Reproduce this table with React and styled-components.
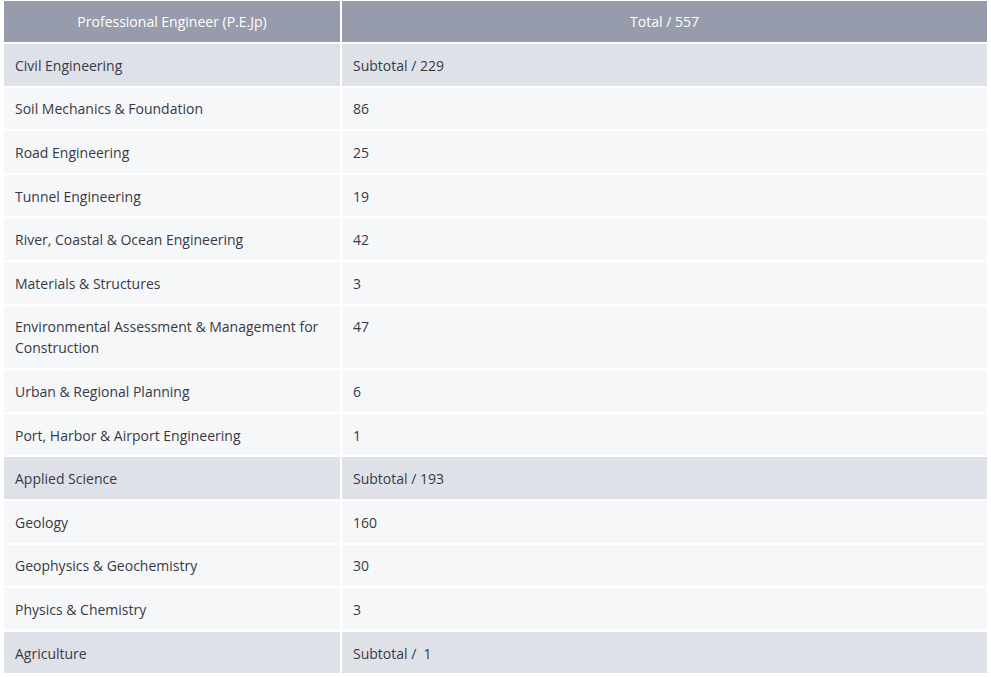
import React from 'react'
import styled, { createGlobalStyle } from 'styled-components'

const GlobalStyle = createGlobalStyle`
body {
  margin: 0;
  background: #fff;
  font-family: "Open Sans", "Noto Sans", sans-serif;
}
`;

const Wrap = styled.div`
padding: 0 2px;
margin-top: -1px;
`;

const Table = styled.table`
width: 100%;
border-collapse: separate;
border-spacing: 2px;
font-size: 14px;
color: #373a46;
`;

const Th = styled.th`
background-color: #979cac;
color: #fff;
font-weight: 400;
height: 41px;
padding: 0 11px;
line-height: 21px;
text-align: center;
box-sizing: border-box;
`;

const Td = styled.td`
background-color: ${({ sub }) => (sub ? '#dfe1e8' : '#f6f7f9')};
padding: 10.8px 11px 9.8px;
line-height: 21px;
vertical-align: top;
text-align: left;
`;

const NameTd = styled(Td)`
width: 314px;
`;

const rows = [
  { name: 'Civil Engineering', value: 'Subtotal / 229', sub: true },
  { name: 'Soil Mechanics & Foundation', value: '86' },
  { name: 'Road Engineering', value: '25' },
  { name: 'Tunnel Engineering', value: '19' },
  { name: 'River, Coastal & Ocean Engineering', value: '42' },
  { name: 'Materials & Structures', value: '3' },
  { name: 'Environmental Assessment & Management for Construction', value: '47' },
  { name: 'Urban & Regional Planning', value: '6' },
  { name: 'Port, Harbor & Airport Engineering', value: '1' },
  { name: 'Applied Science', value: 'Subtotal / 193', sub: true },
  { name: 'Geology', value: '160' },
  { name: 'Geophysics & Geochemistry', value: '30' },
  { name: 'Physics & Chemistry', value: '3' },
  { name: 'Agriculture', value: 'Subtotal / \u00a01', sub: true },
];

function App() {
  return (
    <Wrap>
      <GlobalStyle />
      <Table>
        <thead>
          <tr>
            <Th>Professional Engineer (P.E.Jp)</Th>
            <Th>Total / 557</Th>
          </tr>
        </thead>
        <tbody>
          {rows.map((r) => (
            <tr key={r.name}>
              <NameTd sub={r.sub}>{r.name}</NameTd>
              <Td sub={r.sub}>{r.value}</Td>
            </tr>
          ))}
        </tbody>
      </Table>
    </Wrap>
  )
}

export default App
